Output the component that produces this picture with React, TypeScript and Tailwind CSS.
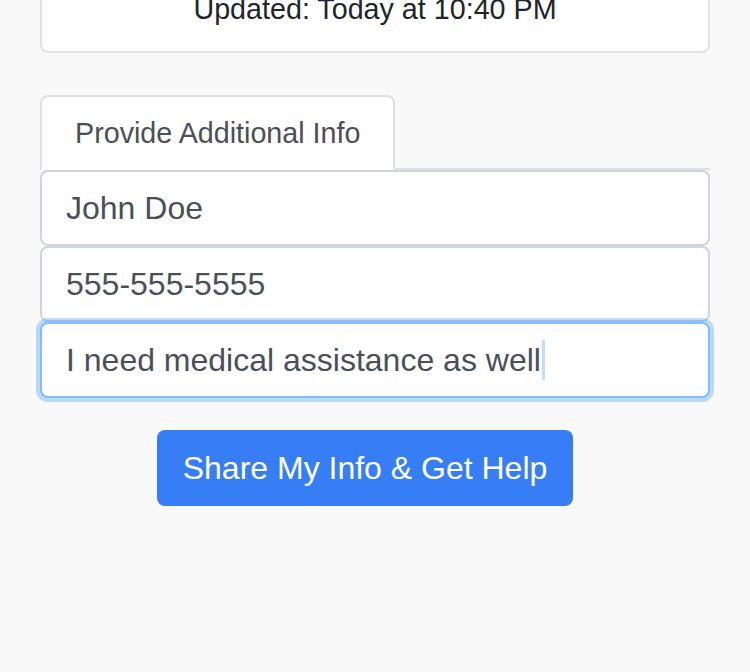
const fields = [
  { value: "John Doe" },
  { value: "555-555-5555" },
];

const App = () => {
  return (
    <div className="min-h-screen bg-[#f9f9f9] px-[40px] overflow-hidden font-['Liberation_Sans',Arial,sans-serif]">
      <div className="-mt-[42px] pt-[28px] pb-[21px] bg-white border-2 border-[#e2e2e2] rounded-b-[8px] text-center text-[28.7px] leading-[42px] text-[#212529]">
        Updated: Today at 10:40 PM
      </div>

      <div className="mt-[42px] flex border-b-2 border-[#dee2e6]">
        <div className="w-[355px] -mb-[2px] pt-[15px] pb-[16px] pl-[33px] bg-white border-2 border-b-0 border-[#dee2e6] rounded-t-[8px] text-[28.7px] leading-[42px] text-[#495057]">
          Provide Additional Info
        </div>
      </div>

      <div className="flex flex-col">
        {fields.map((f) => (
          <div
            key={f.value}
            className="h-[76px] flex items-center px-[24px] bg-white border-2 border-[#ced4da] rounded-[8px] text-[32px] leading-[48px] text-[#495057]"
          >
            {f.value}
          </div>
        ))}
        <div className="relative z-10 h-[76px] flex items-center px-[24px] bg-white border-2 border-[#80bdff] rounded-[8px] shadow-[0_0_0_4px_rgba(0,123,255,0.25)] text-[32px] leading-[48px] text-[#495057]">
          I need medical assistance as well
          <span className="inline-block ml-[1px] w-[3px] h-[40px] bg-[#c4dcfb]" />
        </div>
      </div>

      <div className="mt-[32px] flex justify-center pr-[20px]">
        <button className="h-[76px] px-[26px] rounded-[8px] bg-[#377df6] text-white text-[32px] leading-[48px]">
          Share My Info &amp; Get Help
        </button>
      </div>
    </div>
  );
};

export default App;
